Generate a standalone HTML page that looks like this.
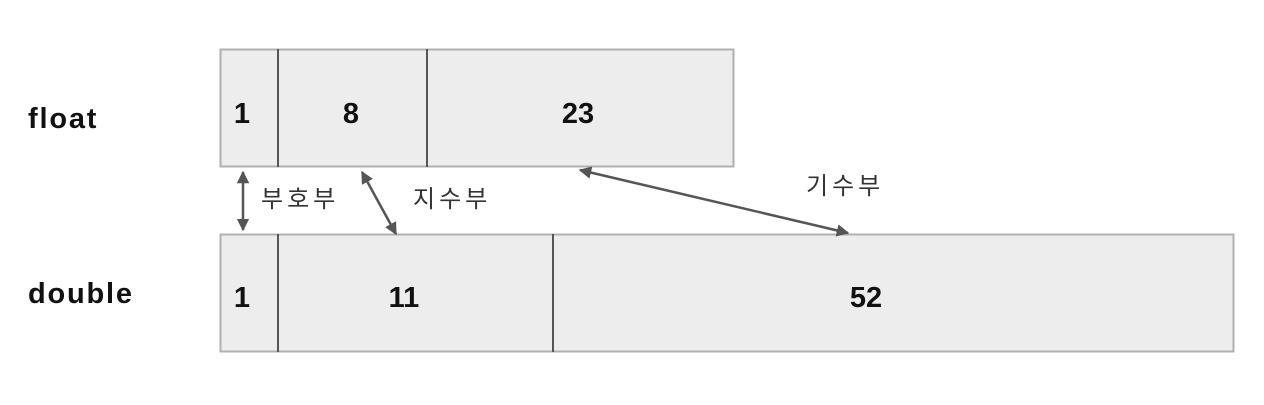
<!DOCTYPE html>
<html><head><meta charset="utf-8"><style>
body{margin:0;width:1264px;height:400px;background:#fff;overflow:hidden}
svg text{font-family:"Liberation Sans","Noto Sans CJK KR",sans-serif}
</style></head><body>
<svg width="1264" height="400" xmlns="http://www.w3.org/2000/svg">
<defs>
<marker id="a" viewBox="0 0 10 10" refX="9" refY="5" markerWidth="5" markerHeight="5" orient="auto-start-reverse">
<path d="M0,0 L10,5 L0,10 Z" fill="#555"/></marker>
</defs>
<rect x="220.5" y="49.5" width="513" height="117" fill="#ededed" stroke="#b0b0b0" stroke-width="2"/>
<line x1="278" y1="49" x2="278" y2="167" stroke="#555" stroke-width="2"/>
<line x1="427" y1="49" x2="427" y2="167" stroke="#555" stroke-width="2"/>
<rect x="220.5" y="234.5" width="1013" height="117" fill="#ededed" stroke="#b0b0b0" stroke-width="2"/>
<line x1="278" y1="234" x2="278" y2="352" stroke="#555" stroke-width="2"/>
<line x1="553" y1="234" x2="553" y2="352" stroke="#555" stroke-width="2"/>
<g font-weight="bold" font-size="29" fill="#111" text-anchor="middle">
<text x="28" y="128" text-anchor="start" letter-spacing="1.8">float</text>
<text x="28" y="303" text-anchor="start" letter-spacing="1.8">double</text>
<text x="242" y="123">1</text><text x="351" y="123">8</text><text x="578" y="123">23</text>
<text x="242" y="307">1</text><text x="404" y="307">11</text><text x="866" y="307">52</text>
</g>
<g stroke="#555" stroke-width="2.5" fill="none">
<line x1="243" y1="172" x2="243" y2="230" marker-start="url(#a)" marker-end="url(#a)"/>
<line x1="362" y1="172" x2="396" y2="234" marker-start="url(#a)" marker-end="url(#a)"/>
<line x1="580" y1="170" x2="848" y2="233" marker-start="url(#a)" marker-end="url(#a)"/>
</g>
<g font-size="24" fill="#333" letter-spacing="4">
<text x="261" y="207">부호부</text>
<text x="413" y="207">지수부</text>
<text x="806" y="194">기수부</text>
</g>
</svg>
</body></html>
